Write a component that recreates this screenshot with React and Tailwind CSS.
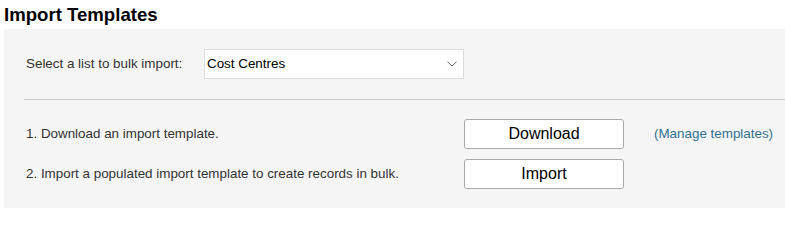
import React from "react";

export default function App() {
  return (
    <div className="w-[785px] h-[213px] overflow-hidden bg-white font-['Liberation_Sans',Arial,sans-serif]">
      <div className="h-[29px] pl-[4px] pt-[3px] text-[18.6px] leading-[24px] font-bold text-black">
        Import Templates
      </div>
      <div className="ml-[4px] w-[800px] bg-[#f5f5f5] pt-[20px] pb-[19px] pl-[20px] text-[13.4px] text-[#333]">
        <div className="flex items-center">
          <div className="w-[180px] pl-[2px]">Select a list to bulk import:</div>
          <div className="flex h-[30px] w-[260px] items-center justify-between border border-[#dcdcdc] bg-white pl-[2px] pr-[6px] text-black">
            <span>Cost Centres</span>
            <svg width="10" height="6" viewBox="0 0 10 6" className="text-[#666]">
              <path d="M0.5 0.8 L5 5 L9.5 0.8" fill="none" stroke="currentColor" strokeWidth="1" />
            </svg>
          </div>
        </div>
        <div className="mt-[20px] mb-[19px] h-px bg-[#c8c8c8]" />
        <div className="flex items-center">
          <div className="w-[440px] pl-[2px]">1. Download an import template.</div>
          <button className="h-[30px] w-[160px] rounded-[3px] border border-[#a9a9a9] bg-white text-[16px] text-black">
            Download
          </button>
          <a className="ml-[30px] text-[#31708f]">(Manage templates)</a>
        </div>
        <div className="mt-[10px] flex items-center">
          <div className="w-[440px] pl-[2px]">2. Import a populated import template to create records in bulk.</div>
          <button className="h-[30px] w-[160px] rounded-[3px] border border-[#a9a9a9] bg-white text-[16px] text-black">
            Import
          </button>
        </div>
      </div>
    </div>
  );
}
